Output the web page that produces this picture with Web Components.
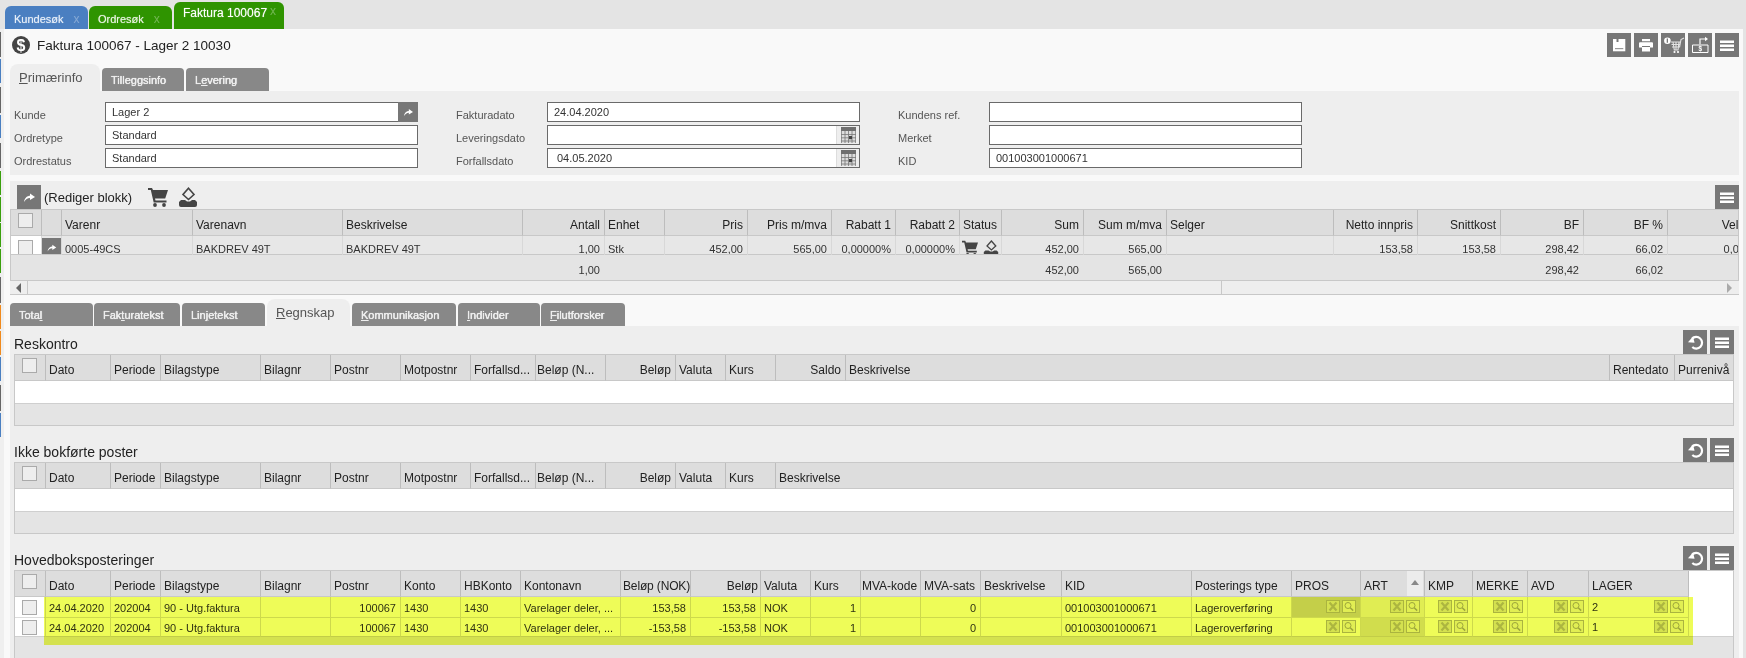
<!DOCTYPE html>
<html lang="no">
<head>
<meta charset="utf-8">
<title>Faktura 100067</title>
<style>
  html,body{margin:0;padding:0;background:#e4e4e4;overflow:hidden}
  body{width:1746px;height:658px;font:12px "Liberation Sans",Arial,sans-serif;color:#222}
</style>
</head>
<body>
<erp-shell>
  <app-tab slot="tabs" tone="blue" style="width:83px">Kundesøk</app-tab>
  <app-tab slot="tabs" tone="green" style="width:83px">Ordresøk</app-tab>
  <app-tab slot="tabs" tone="green" active style="width:110px;margin-left:1px">Faktura 100067</app-tab>

  <title-bar slot="main">
    <span>Faktura 100067 - Lager 2 10030</span>
    <icon-btn slot="actions" icon="save"></icon-btn>
    <icon-btn slot="actions" icon="print"></icon-btn>
    <icon-btn slot="actions" icon="cartpay"></icon-btn>
    <icon-btn slot="actions" icon="export"></icon-btn>
    <icon-btn slot="actions" icon="menu"></icon-btn>
  </title-bar>

  <sub-tabs slot="main" style="height:27px">
    <sub-tab active style="width:90px"><u>P</u>rimærinfo</sub-tab>
    <sub-tab style="width:82px;margin-left:2px">Tilleggsinfo</sub-tab>
    <sub-tab style="width:83px;margin-left:2px">L<u>e</u>vering</sub-tab>
  </sub-tabs>

  <form-panel slot="main">
    <form-field label="Kunde" value="Lager 2" kind="go"></form-field>
    <form-field label="Ordretype" value="Standard"></form-field>
    <form-field label="Ordrestatus" value="Standard"></form-field>
    <form-field label="Fakturadato" value="24.04.2020"></form-field>
    <form-field label="Leveringsdato" value="" kind="date"></form-field>
    <form-field label="Forfallsdato" value="04.05.2020" kind="date" indent></form-field>
    <form-field label="Kundens ref." value=""></form-field>
    <form-field label="Merket" value=""></form-field>
    <form-field label="KID" value="001003001000671"></form-field>
  </form-panel>

  <lines-panel slot="main">
    <data-grid spec="lines"></data-grid>
    <scroll-bar></scroll-bar>
  </lines-panel>

  <sub-tabs slot="main" style="height:31px">
    <sub-tab style="width:83px">Tota<u>l</u></sub-tab>
    <sub-tab style="width:86px;margin-left:1px">Fak<u>t</u>uratekst</sub-tab>
    <sub-tab style="width:83px;margin-left:2px">Lin<u>j</u>etekst</sub-tab>
    <sub-tab active style="width:83px;margin-left:2px"><u>R</u>egnskap</sub-tab>
    <sub-tab style="width:104px;margin-left:2px"><u>K</u>ommunikasjon</sub-tab>
    <sub-tab style="width:82px;margin-left:2px"><u>I</u>ndivider</sub-tab>
    <sub-tab style="width:84px;margin-left:1px"><u>F</u>ilutforsker</sub-tab>
  </sub-tabs>

  <ledger-panel slot="main">
    <grid-section heading="Reskontro"><data-grid spec="reskontro"></data-grid></grid-section>
    <grid-section heading="Ikke bokførte poster"><data-grid spec="ikke"></data-grid></grid-section>
    <grid-section heading="Hovedboksposteringer"><data-grid spec="hb"></data-grid></grid-section>
  </ledger-panel>
</erp-shell>

<script>
const ICONS = {
  menu:'<path fill="#fff" d="M5 7.500h14V10H5zM5 11.500h14V14H5zM5 15.500h14V18H5z"/>',
  save:'<path fill="#fff" d="M6 6h12.300v12.300H6z"/><path fill="#777" d="M9.500 6h2v3h-2z"/><path fill="#999" d="M8 15h8.300v1.200H8z"/>',
  print:'<path fill="#fff" d="M8 6h8v2.200H8zM6 9.200h12a1 1 0 0 1 1 1V14.600h-3V13H8v1.600H5v-4.400a1 1 0 0 1 1-1zM8 14h8v4.500H8z"/>',
  cartpay:'<circle cx="6.400" cy="7.700" r="3.300" fill="#fff"/><path fill="#777" d="M5.700 5.600h1.300v4.200H5.700z"/><path fill="none" stroke="#e4e4e4" stroke-width="1.100" d="M10 9h10M10.500 11.500h9M11 14h8M12 9l1.300 8M15 9v8M18 9l-1 8M12.800 17h4.600M18.500 14.500L20 6.500 23 5"/><circle cx="13.500" cy="19" r="1.100" fill="#fff"/><circle cx="17" cy="19" r="1.100" fill="#fff"/>',
  export:'<path fill="none" stroke="#fff" stroke-width="1" d="M11 12H4.500v7.500h15.500V12H13"/><path fill="none" stroke="#fff" stroke-width="1.200" d="M12 13V6h5"/><path fill="#fff" d="M17 3.800l3 2.200-3 2.200z"/><text x="12.200" y="18.300" font-size="6.500" font-weight="700" fill="#fff" text-anchor="middle" font-family="Liberation Sans">$</text>',
  refresh:'<path fill="none" stroke="#fff" stroke-width="2.200" d="M9 8.800A5.800 5.800 0 1 1 9.300 17"/><path fill="#fff" d="M5 12.300 10 6.500l1.600 6.200z"/>',
  go:'<path fill="#fff" d="M7 17C7.500 12.800 10.500 10.800 13 10.800V8.500L18 12l-5 3v-2C10.500 13 8.700 14.500 7 17z"/>'
};
function svgIcon(name,size){return `<svg width="${size}" height="${size}" viewBox="0 0 24 24" aria-hidden="true">${ICONS[name]}</svg>`;}
const CART = '<svg viewBox="0 0 20 20" aria-hidden="true"><path fill="#444" d="M0 1H4L5 3H20L17.200 11.500H7L7.500 13.500H18.500V15.500H5.700L2.800 3H0Z"/><circle cx="7" cy="18" r="1.900" fill="#444"/><circle cx="16" cy="18" r="1.900" fill="#444"/></svg>';
const ERASER = '<svg viewBox="0 0 20 20" aria-hidden="true"><path fill="none" stroke="#444" stroke-width="1.600" d="M10.500 1.200 16 7.500 10.500 12.500 5 7.500Z"/><path fill="#444" d="M3 13H7L9 14.500H12L14 13H17L19 15V18A2 2 0 0 1 17 20H3A2 2 0 0 1 1 18V15Z"/></svg>';

function define(name,css,html,extra){
  customElements.define(name,class extends HTMLElement{
    constructor(){super();this.attachShadow({mode:'open'}).innerHTML=`<style>${css}</style>${html}`;}
    connectedCallback(){extra&&extra.call(this,this.shadowRoot);}
  });
}

define('erp-shell',`
  :host{display:flex;flex-direction:column;width:1746px;height:658px;overflow:hidden}
  .tabs{display:flex;align-items:flex-end;height:29px;padding-left:5px;gap:1px;flex:none}
  .body{display:flex;flex:1;min-height:0}
  .rail{width:4px;background:#efefef;padding-top:3px;box-sizing:border-box;display:flex;flex-direction:column;flex:none}
  .rail i{display:block;width:1px;flex:none}
  .main{width:1739px;background:#f9f9f9;padding:0 4px 0 6px;box-sizing:border-box;display:flex;flex-direction:column;flex:none;min-height:0}
`,`<div class="tabs"><slot name="tabs"></slot></div>
  <div class="body"><div class="rail"></div><div class="main"><slot name="main"></slot></div></div>`,
  function(r){
    const strips=[['#666',25,2],['#4a7fc1',24,4],['#666',26,2],['#4a7fc1',23,5],['#666',25,3],['#3aa00c',24,2],['#3aa00c',25,1],['#3aa00c',24,2],['#3aa00c',24,4],['#666',26,2],['#f08a1d',24,2],['#f08a1d',24,2],['#4a7fc1',24,4],['#666',26,2],['#4a7fc1',24,0]];
    r.querySelector('.rail').innerHTML=strips.map(s=>`<i style="background:${s[0]};height:${s[1]}px;margin-bottom:${s[2]}px"></i>`).join('');
  });

define('app-tab',`
  :host{display:flex;align-items:center;box-sizing:border-box;height:23px;border-radius:6px 6px 0 0;color:#fff;font-size:11px;padding:2px 0 0 9px;text-shadow:0 0 1px rgba(255,255,255,.6);flex:none;gap:10px}
  :host([tone=blue]){background:#4a7fc1;color:#e8f0fa}
  :host([tone=green]){background:#2f9400;color:#eaf5e2}
  :host([active]){height:27px;padding:0 0 6px 9px;gap:3px;color:#fff;font-size:12px}
  .x{font-size:12px;color:rgba(255,255,255,.32);text-shadow:none}
  :host([active]) .x{margin-top:-3px}
`,`<slot></slot><span class="x">x</span>`);

define('icon-btn',`
  :host{display:block;width:24px;height:24px;background:#777;flex:none}
  svg{display:block}
`,'',function(r){ if(!r.querySelector('svg')) r.innerHTML+=svgIcon(this.getAttribute('icon'),24); });

define('title-bar',`
  :host{display:flex;justify-content:space-between;align-items:flex-start;height:35px;padding:4px 0 0 2px;box-sizing:border-box;flex:none}
  .t{display:flex;align-items:center;gap:7px;height:24px;font-size:13.5px;color:#222}
  .a{display:flex;gap:3px}
  svg{display:block}
`,`<div class="t"><svg width="18" height="18" viewBox="0 0 18 18" aria-hidden="true"><circle cx="9" cy="9" r="9" fill="#444"/><text x="9" y="14.800" font-size="16" font-weight="700" fill="#fff" text-anchor="middle" font-family="Liberation Sans">$</text></svg><slot></slot></div><div class="a"><slot name="actions"></slot></div>`);

define('sub-tabs',`:host{display:flex;align-items:flex-end;flex:none}`,`<slot></slot>`);
define('sub-tab',`
  :host{display:flex;align-items:center;box-sizing:border-box;height:23px;background:#888;color:#eee;font-size:11px;text-shadow:0 0 1px #eee,0 0 .5px #eee;border-radius:4px 4px 0 0;padding-left:9px;flex:none}
  :host([active]){height:27px;background:#eee;color:#555;font-size:13px;text-shadow:none;border-radius:8px 8px 0 0;padding:0 0 1px 9px}
`,`<slot></slot>`);

define('form-panel',`
  :host{display:grid;grid-auto-flow:column;grid-template-rows:repeat(3,20px);grid-template-columns:404px 404px 404px;column-gap:38px;row-gap:3px;height:84px;padding:11px 0 0 4px;box-sizing:border-box;background:#eee;flex:none}
`,`<slot></slot>`);

define('form-field',`
  :host{display:flex;font-size:11px}
  label{width:91px;flex:none;color:#555;line-height:20px;padding-top:3px;box-sizing:border-box}
  .in{flex:1;display:flex;border:1px solid #6a6a6a;background:#fff;box-sizing:border-box;height:20px;line-height:18px}
  .v{flex:1;padding-left:6px;color:#333;white-space:nowrap}
  .go{width:20px;height:20px;margin:-1px -1px -1px 0;background:#777}
  .cal{width:22px;background:#eee;border-left:1px solid #ddd;display:flex;align-items:center;justify-content:center}
  svg{display:block}
`,'',function(r){
  if(r.querySelector('label'))return;
  const k=this.getAttribute('kind');
  const pad=this.hasAttribute('indent')?'style="padding-left:9px"':'';
  const tail=k==='go'?`<div class="go">${svgIcon('go',20)}</div>`:k==='date'?`<div class="cal"><svg width="15" height="16" viewBox="0 0 15 16" aria-hidden="true"><path fill="#6f6f6f" d="M0 0h15v4H0z"/><path fill="#ddd" d="M0 4h15v12H0z"/><path stroke="#777" stroke-width=".8" fill="none" d="M.4 4v12M4 4v12M7.500 4v12M11 4v12M14.600 4v12M0 7.500h15M0 10.800h15M0 14h15"/><path fill="#444" d="M8 9h3v3.200H8z"/></svg></div>`:'';
  r.innerHTML+=`<label>${this.getAttribute('label')}</label><div class="in"><span class="v" ${pad}>${this.getAttribute('value')}</span>${tail}</div>`;
});

define('lines-panel',`
  :host{display:block;background:#eee;flex:none;margin-top:6px;height:113px;border-bottom:1px solid #c8c8c8;box-sizing:content-box}
  .h{display:flex;align-items:center;height:24px;padding:4px 0 0 7px;gap:3px;font-size:13px;color:#222}
  .h span{margin-right:13px}
  .cart,.er{display:block;height:20px;width:20px}
  .er{margin-left:7px}
  .sp{flex:1}
  svg{display:block}
`,'',function(r){
  if(r.querySelector('.h'))return;
  r.innerHTML+=`<div class="h"><icon-btn icon="go"></icon-btn><span>(Rediger blokk)</span><div class="cart">${CART}</div><div class="er">${ERASER}</div><div class="sp"></div><icon-btn icon="menu"></icon-btn></div><slot></slot>`;
});

define('scroll-bar',`
  :host{display:flex;height:13px;background:#eee;align-items:center}
  .l{width:18px;height:100%;border-right:1px solid #c8c8c8;box-sizing:border-box;display:flex;align-items:center;justify-content:center}
  .m{width:1194px;height:100%;border-right:1px solid #c8c8c8;box-sizing:border-box}
  .f{flex:1}
  .r{width:12px;text-align:center;display:flex;align-items:center}
  .l i{border:5px solid transparent;border-right:5px solid #666;border-left:0;display:block}
  .r i{border:5px solid transparent;border-left:5px solid #aaa;border-right:0;display:block}
`,`<div class="l"><i></i></div><div class="m"></div><div class="f"></div><div class="r"><i></i></div>`);

define('ledger-panel',`
  :host{display:flex;flex-direction:column;gap:12px;background:#eee;flex:1;min-height:0;padding:4px 5px 0 4px;overflow:hidden}
`,`<slot></slot>`);

define('grid-section',`
  :host{display:block;flex:none}
  .h{display:flex;align-items:flex-end;height:24px;gap:3px}
  .t{flex:1;font-size:14px;color:#222;line-height:18px;padding-bottom:1px}
  svg{display:block}
`,'',function(r){
  if(r.querySelector('.h'))return;
  r.innerHTML+=`<div class="h"><div class="t">${this.getAttribute('heading')}</div><icon-btn icon="refresh"></icon-btn><icon-btn icon="menu"></icon-btn></div><slot></slot>`;
});

/* ---- data ---- */
/* edges are the x of each column's separator line: the cell ends one pixel after it */
function colsOf(a,labels){
  const e=a.map((v,i)=>i===0||i===a.length-1&&v>1735?v:v+1);
  return labels.map((l,i)=>({w:e[i+1]-e[i],...l}));
}
const L=(t,r,pd)=>({t,r:!!r,pd});
const lineCols=colsOf([10,41,61,192,342,522,604,664,747,831,895,959,1001,1083,1166,1333,1417,1500,1583,1667,1750],
 [L('@chk'),L(''),L('Varenr'),L('Varenavn'),L('Beskrivelse'),L('Antall',1),L('Enhet'),L('Pris',1),L('Pris m/mva',1),L('Rabatt 1',1),L('Rabatt 2',1),L('Status'),L('Sum',1),L('Sum m/mva',1),L('Selger'),L('Netto innpris',1),L('Snittkost',1),L('BF',1),L('BF %',1),L('Velg',1)]);
const common=[L('Dato'),L('Periode'),L('Bilagstype'),L('Bilagnr'),L('Postnr'),L('Motpostnr'),L('Forfallsd...'),L('Beløp (N...',0,'nl')];
const SPECS={
  lines:{cols:lineCols,head:27,rows:[
    {h:18,bg:'#e7e7e7',line:'#d8d8d8',cells:['@chkw','@go','0005-49CS','BAKDREV 49T','BAKDREV 49T','1,00','Stk','452,00','565,00','0,00000%','0,00000%','@status','452,00','565,00','','153,58','153,58','298,42','66,02','0,00']},
    {h:27,bg:'#e4e4e4',line:'transparent',top:'#c8c8c8',cells:['','','','','','1,00','','','','','','','452,00','565,00','','','','298,42','66,02','']}
  ]},
  reskontro:{cols:colsOf([14,45,110,160,260,330,400,470,535,605,675,725,775,845,1609,1674,1734],
    [L('@chk'),...common,L('Beløp',1),L('Valuta'),L('Kurs'),L('Saldo',1),L('Beskrivelse'),L('Rentedato'),L('Purrenivå')]),
    head:27,band:[22,23]},
  ikke:{cols:colsOf([14,45,110,160,260,330,400,470,535,605,675,725,775,1734],
    [L('@chk'),...common,L('Beløp',1),L('Valuta'),L('Kurs'),L('Beskrivelse')]),
    head:27,band:[22,23],lastOpen:true},
  hb:{cols:colsOf([14,45,110,160,260,330,400,460,520,620,690,760,810,860,920,980,1061,1191,1291,1360,1424,1472,1527,1588,1688],
    [L('@chk'),L('Dato'),L('Periode'),L('Bilagstype'),L('Bilagnr'),L('Postnr'),L('Konto'),L('HBKonto'),L('Kontonavn'),L('Beløp (NOK)',0,'tight'),L('Beløp',1,'nr'),L('Valuta'),L('Kurs'),L('MVA-kode',0,'nl'),L('MVA-sats'),L('Beskrivelse'),L('KID'),L('Posterings type'),L('PROS'),L('@sort ART'),L('KMP'),L('MERKE'),L('AVD'),L('LAGER')]),
    head:27,filler:true,highlight:true,tailBand:30,rows:[
    {h:21,bg:'#fff',line:'#dcdcdc',bottom:'#dcdcdc',tint:{18:'#d2d2d2',19:'#f0f0f0'},cells:['@chk','24.04.2020','202004','90 - Utg.faktura','','100067','1430','1430','Varelager deler, ...','153,58','153,58','NOK','1','','0','','001003001000671','Lageroverføring','@lk','@lk','@lk','@lk','@lk','@lk 2']},
    {h:19,bg:'#fff',line:'#dcdcdc',bottom:'#d0d0d0',tint:{19:'#e0e0e0'},cells:['@chk','24.04.2020','202004','90 - Utg.faktura','','100067','1430','1430','Varelager deler, ...','-153,58','-153,58','NOK','1','','0','','001003001000671','Lageroverføring','@lk','@lk','@lk','@lk','@lk','@lk 1']}
  ]}
};
SPECS.hb.rows.forEach(r=>{r.rightCols=[5,9,10,12,14];});

const LK=`<span class="lk x"><svg viewBox="0 0 12 11" width="12" height="11" aria-hidden="true"><path stroke="#b8b8b8" stroke-width="2.200" d="M2.500 1.500l7 8M9.500 1.500l-7 8"/></svg></span><span class="lk"><svg viewBox="0 0 12 11" width="12" height="11" aria-hidden="true"><circle cx="5" cy="4.500" r="3" fill="none" stroke="#a8a8a8" stroke-width="1"/><path stroke="#a8a8a8" stroke-width="1.500" d="M7.200 6.800l3 2.800"/></svg></span>`;

define('data-grid',`
  :host{display:block;position:relative;overflow:hidden;outline:1px solid #c8c8c8;outline-offset:-1px;background:#fff;font-size:11px;color:#333}
  .g{display:grid}
  .c{box-sizing:border-box;white-space:nowrap;overflow:hidden;padding:0 4px 0 3px;display:flex;align-items:center;min-width:0;line-height:14px}
  .c.r{justify-content:flex-end}
  .hd{background:#ddd;border-top:1px solid #c8c8c8;border-bottom:1px solid #c8c8c8;border-right:1px solid #bdbdbd;padding-top:5px;color:#222;font-size:12px}
  .hd.open{border-right:0}
  .hd.fill{background:#fff;border:0}
  .hd.tight{padding-left:2px;padding-right:0;letter-spacing:-.15px}
  .hd.nl{padding-left:1px;padding-right:0}
  .hd.nr{padding-right:2px}
  .ck{display:block;width:15px;height:15px;box-sizing:border-box;border:1px solid #aaa;background:#eee;flex:none}
  .c.mid{justify-content:center;padding:0}
  .sort{position:absolute;right:1px;top:0;bottom:0;width:16px;background:#ececec;display:flex;align-items:center;justify-content:center}
  .sort i{display:block;border:4.500px solid transparent;border-bottom:5px solid #888;border-top:0;margin-top:-3px}
  .hd.has{position:relative}
  .lks{display:flex;gap:2px;margin-left:auto;margin-top:-1px}
  .lk{display:flex;align-items:center;justify-content:center;width:14px;height:13px;box-sizing:border-box;border:1px solid #b6b6b6;background:#f1f1f1}
  .lk.x{background:#e4e4e4}
  svg{display:block}
  .rowtext{align-items:flex-start}
  .gobtn{display:block;width:19px;height:18px;margin:2px 0 0 0;background:#777;overflow:hidden}
  .st{display:flex;gap:5px;padding:4px 0 0 2px;align-items:flex-start;height:14px}
  .st span{display:block;width:16px;height:16px;flex:none}
  .hl{position:absolute;left:30px;top:27px;width:1649px;height:48px;background:#eefc58;mix-blend-mode:multiply;pointer-events:none}
  .band{grid-column:1/-1;box-sizing:border-box}
`,'',function(r){
  if(r.querySelector('.g'))return;
  const s=SPECS[this.getAttribute('spec')];
  const tpl=s.cols.map(c=>c.w+'px').join(' ');
  let html='';
  const n=s.cols.length;
  s.cols.forEach((c,i)=>{
    if(c.t==='@chk'){html+=`<div class="c hd mid"><span class="ck" style="margin-top:-5px;margin-right:1px"></span></div>`;return;}
    const open=s.lastOpen&&i===n-1?' open':'';
    if(c.t.startsWith('@sort')){html+=`<div class="c hd has">${c.t.slice(6)}<span class="sort"><i></i></span></div>`;return;}
    html+=`<div class="c hd${c.r?' r':''}${open}${c.pd?' '+c.pd:''}">${c.t}</div>`;
  });
  if(s.filler)html+=`<div class="c hd fill"></div>`;
  const rows=[];
  (s.rows||[]).forEach(row=>{
    row.cells.forEach((v,i)=>{
      const rt=s.cols[i].r||(row.rightCols&&row.rightCols.includes(i));
      const bg=(row.tint&&row.tint[i])||row.bg;
      const clip=row.h===18;
      let st=`background:${bg};border-right:1px solid ${row.line};`;
      if(row.bottom)st+=`border-bottom:1px solid ${row.bottom};`;
      if(row.top)st+=`border-top:1px solid ${row.top};`;
      if(v==='@chk'){html+=`<div class="c mid" style="background:#fff;border-right:1px solid ${row.line};${row.bottom?'border-bottom:1px solid '+row.bottom:''}"><span class="ck" style="margin-right:1px"></span></div>`;return;}
      if(v==='@chkw'){html+=`<div class="c mid" style="background:#fff;align-items:flex-start;padding-top:4px;border-right:1px solid ${row.line}"><span class="ck"></span></div>`;return;}
      if(v==='@go'){html+=`<div class="c" style="${st}padding:0;align-items:flex-start"><span class="gobtn">${svgIcon('go',19)}</span></div>`;return;}
      if(v==='@status'){html+=`<div class="c st" style="${st}height:18px"><span>${CART}</span><span>${ERASER}</span></div>`;return;}
      if(v.startsWith('@lk')){const t=v.slice(4);html+=`<div class="c" style="${st}">${t}<span class="lks">${LK}</span></div>`;return;}
      const top=clip?6:row.h===27?3:2;
      html+=`<div class="c${rt?' r':''}${clip?' rowtext':''}" style="${st}padding-top:${top}px;">${v}</div>`;
    });
    if(s.filler)html+=`<div class="c" style="background:#fff${row===s.rows[s.rows.length-1]?';border-bottom:1px solid #d0d0d0':''}"></div>`;
    rows.push(row.h);
  });
  const bands=[];
  (s.band||[]).forEach((h,i)=>{
    html+=`<div class="band" style="background:${i?'#e4e4e4':'#fff'};${i?'border-top:1px solid #cfcfcf;border-bottom:1px solid #c8c8c8':''}"></div>`;
    bands.push(h);
  });
  if(s.tailBand){html+=`<div class="band" style="background:#e4e4e4"></div>`;bands.push(s.tailBand);}
  const cols=tpl+(s.filler?' 1fr':'');
  const trows=[s.head,...rows,...bands].map(h=>h+'px').join(' ');
  r.innerHTML+=`<div class="g" style="grid-template-columns:${cols};grid-template-rows:${trows}">${html}</div>${s.highlight?'<div class="hl"></div>':''}`;
});
</script>
</body>
</html>
